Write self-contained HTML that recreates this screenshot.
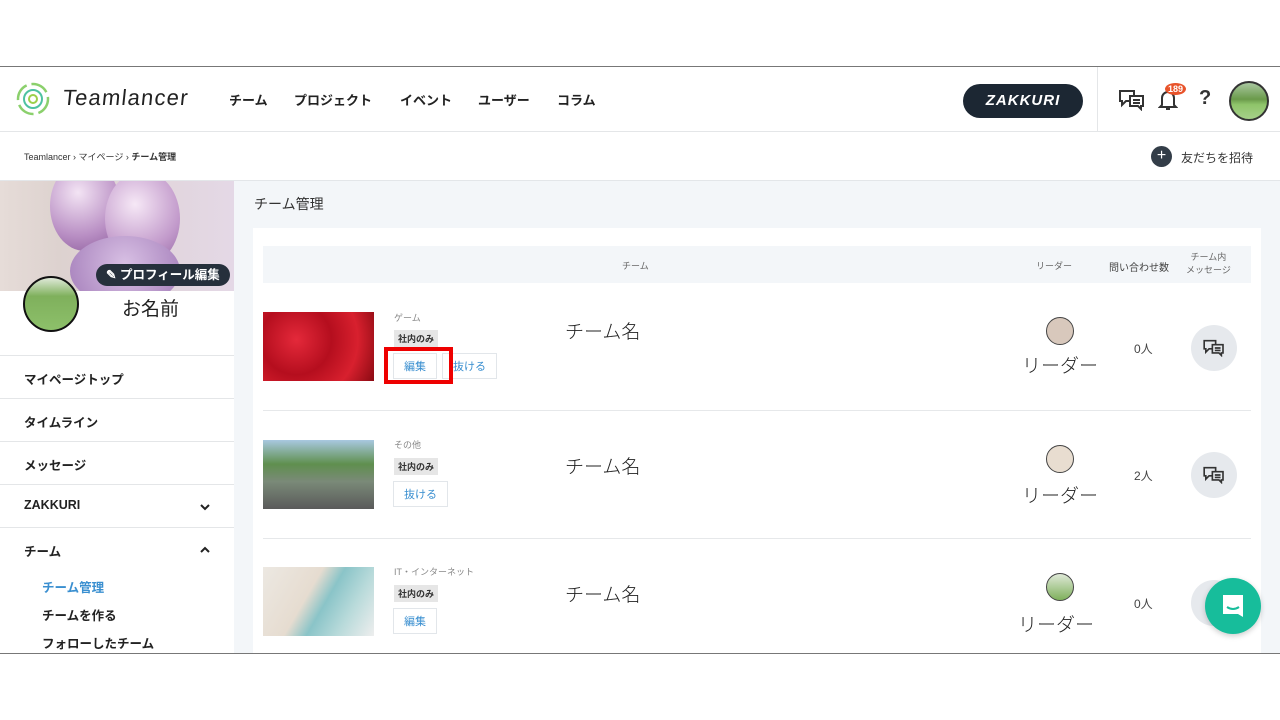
<!DOCTYPE html>
<html><head><meta charset="utf-8"><style>
*{margin:0;padding:0;box-sizing:border-box}
body{width:1280px;height:720px;background:#fff;font-family:"Liberation Sans","Noto Sans CJK JP",sans-serif;position:relative;overflow:hidden;color:#333}
.a{position:absolute}
.nav{font-size:13px;font-weight:bold;color:#222;top:90px}
.side{left:0;width:234px;border-top:1px solid #e4e6e8;height:43px;font-size:12.5px;font-weight:bold;color:#222;padding:13px 0 0 24px}
.tag{font-size:9px;font-weight:bold;background:#e6e6e6;color:#333;padding:2px 4px}
.btn{font-size:11px;color:#3a8fd0;border:1px solid #e2e6ea;background:#fff;padding:4px 10px}
.big{font-size:19px;color:#222;font-weight:300}
.circ{border-radius:50%}
.msg{width:46px;height:46px;border-radius:50%;background:#e6e9ed}
</style></head><body>
<div class="a" style="top:66px;left:0;width:1280px;height:1px;background:#777"></div>
<div class="a" style="top:653px;left:0;width:1280px;height:1px;background:#777"></div>
<svg class="a" style="left:16px;top:82px" width="34" height="34" viewBox="0 0 34 34"><circle cx="17" cy="17" r="15" fill="none" stroke="#8bd06c" stroke-width="2.5" stroke-dasharray="18 5"/><circle cx="17" cy="17" r="9" fill="none" stroke="#4ec2a0" stroke-width="2"/><circle cx="17" cy="17" r="4" fill="none" stroke="#9ccf4a" stroke-width="2"/></svg>
<div class="a" style="left:63px;top:85px;font-size:22px;letter-spacing:1.2px;color:#222;transform:skewX(-6deg)">Teamlancer</div>
<div class="a nav" style="left:229px">チーム</div>
<div class="a nav" style="left:294px">プロジェクト</div>
<div class="a nav" style="left:400px">イベント</div>
<div class="a nav" style="left:478px">ユーザー</div>
<div class="a nav" style="left:557px">コラム</div>
<div class="a" style="left:963px;top:84px;width:120px;height:34px;border-radius:17px;background:#1c2733;color:#fff;font-weight:bold;font-style:italic;font-size:15px;letter-spacing:1px;text-align:center;line-height:34px">ZAKKURI</div>
<div class="a" style="left:1097px;top:67px;width:1px;height:64px;background:#e4e6e8"></div>
<svg class="a" style="left:1118px;top:89px" width="28" height="22" viewBox="0 0 28 22" fill="none" stroke="#333" stroke-width="2"><path d="M2 2h14v10H8l-4 4v-4H2z"/><path d="M12 7h13v10h-2v3l-3-3h-8z" fill="#fff"/><path d="M15 11h7M15 14h7"/></svg>
<svg class="a" style="left:1158px;top:89px" width="20" height="22" viewBox="0 0 20 22" fill="none" stroke="#333" stroke-width="2"><path d="M4 16V9a6 6 0 0112 0v7l2 2H2z"/><path d="M8 20h4"/></svg>
<div class="a circ" style="left:1165px;top:83px;background:#e8532a;color:#fff;font-size:9px;font-weight:bold;padding:1px 3px">189</div>
<div class="a" style="left:1199px;top:87px;font-size:20px;font-weight:bold;color:#333">?</div>
<div class="a circ" style="left:1229px;top:81px;width:40px;height:40px;border:2px solid #333;background:linear-gradient(#a9c7a0 0%,#6a9a4a 45%,#8fc46a 60%,#a6d08a 100%)"></div>
<div class="a" style="left:0;top:131px;width:1280px;height:1px;background:#e4e6e8"></div>
<div class="a" style="left:24px;top:150px;font-size:9px;color:#333">Teamlancer › マイページ › <b>チーム管理</b></div>
<div class="a circ" style="left:1151px;top:146px;width:21px;height:21px;background:#333d48;color:#fff;text-align:center;line-height:20px;font-size:16px">+</div>
<div class="a" style="left:1181px;top:149px;font-size:12px;color:#333">友だちを招待</div>
<div class="a" style="left:0;top:180px;width:1280px;height:3px;background:linear-gradient(#e0e3e6,#f3f6f9)"></div>
<div class="a" style="left:234px;top:181px;width:1046px;height:472px;background:#f3f6f9"></div>
<div class="a" style="left:0;top:181px;width:234px;height:110px;background:linear-gradient(90deg,#e6dcd8 0%,#ddd2cf 25%,#e4d8e6 100%);overflow:hidden">
<div class="a circ" style="left:50px;top:-20px;width:70px;height:90px;background:radial-gradient(circle at 40% 35%,#f3e4f4,#b98fc4 60%,#8a5a9a)"></div>
<div class="a circ" style="left:105px;top:-10px;width:75px;height:95px;background:radial-gradient(circle at 40% 35%,#f6e8f6,#c29acb 60%,#9062a0)"></div>
<div class="a circ" style="left:70px;top:55px;width:110px;height:70px;background:radial-gradient(circle at 50% 40%,#d8c0e4,#a27bb8)"></div>
</div>
<div class="a" style="left:96px;top:264px;width:134px;height:22px;border-radius:11px;background:#26303c;color:#fff;font-size:12.5px;font-weight:bold;line-height:22px;padding-left:10px">✎ プロフィール編集</div>
<div class="a circ" style="left:23px;top:276px;width:56px;height:56px;border:2px solid #111;background:linear-gradient(#dfe9d8 0%,#7fb05c 35%,#8dc06a 100%)"></div>
<div class="a" style="left:122px;top:294px;font-size:19px;color:#222">お名前</div>
<div class="a side" style="top:355px">マイページトップ</div>
<div class="a side" style="top:398px">タイムライン</div>
<div class="a side" style="top:441px">メッセージ</div>
<div class="a side" style="top:484px">ZAKKURI<svg style="position:absolute;left:199px;top:18px" width="12" height="8" viewBox="0 0 12 8"><path d="M2 2l4 4 4-4" fill="none" stroke="#222" stroke-width="2"/></svg></div>
<div class="a side" style="top:527px;height:126px">チーム<svg style="position:absolute;left:199px;top:18px" width="12" height="8" viewBox="0 0 12 8"><path d="M2 6l4-4 4 4" fill="none" stroke="#222" stroke-width="2"/></svg></div>
<div class="a" style="left:42px;top:577px;font-size:12.5px;font-weight:bold;color:#3a8fd0">チーム管理</div>
<div class="a" style="left:42px;top:605px;font-size:12.5px;font-weight:bold;color:#222">チームを作る</div>
<div class="a" style="left:42px;top:633px;font-size:12.5px;font-weight:bold;color:#222">フォローしたチーム</div>
<div class="a" style="left:254px;top:194px;font-size:14px;color:#333">チーム管理</div>
<div class="a" style="left:253px;top:228px;width:1008px;height:425px;background:#fff"></div>
<div class="a" style="left:263px;top:246px;width:988px;height:37px;background:#f3f6f9"></div>
<div class="a" style="left:622px;top:259px;font-size:9px;color:#666">チーム</div>
<div class="a" style="left:1036px;top:259px;font-size:9px;color:#666">リーダー</div>
<div class="a" style="left:1109px;top:259px;font-size:10px;color:#444">問い合わせ数</div>
<div class="a" style="left:1186px;top:251px;font-size:9px;color:#666;text-align:center;line-height:13px">チーム内<br>メッセージ</div>
<div class="a" style="left:263px;top:410px;width:988px;height:1px;background:#e6e8ea"></div>
<div class="a" style="left:263px;top:538px;width:988px;height:1px;background:#e6e8ea"></div>
<div class="a" style="left:263px;top:312px;width:111px;height:69px;background:radial-gradient(circle at 30% 40%,#e4293a 0,#b50e1e 40%,#d8202e 70%,#8a0a12 100%)"></div>
<div class="a" style="left:394px;top:311px;font-size:9px;color:#888">ゲーム</div>
<div class="a tag" style="left:394px;top:330px">社内のみ</div>
<div class="a btn" style="left:393px;top:353px">編集</div>
<div class="a btn" style="left:442px;top:353px">抜ける</div>
<div class="a" style="left:384px;top:347px;width:69px;height:37px;border:4px solid #e00"></div>
<div class="a big" style="left:565px;top:317px">チーム名</div>
<div class="a circ" style="left:1046px;top:317px;width:28px;height:28px;border:1.5px solid #444;background:#d8c8bc"></div>
<div class="a big" style="left:1022px;top:351px">リーダー</div>
<div class="a" style="left:1134px;top:340px;font-size:12px;color:#444">0人</div>
<div class="a msg" style="left:1191px;top:325px"></div>
<div class="a" style="left:263px;top:440px;width:111px;height:69px;background:linear-gradient(#a8c8e0 0%,#5f8f4e 35%,#7a8a78 60%,#5a5a5a 100%)"></div>
<div class="a" style="left:394px;top:438px;font-size:9px;color:#888">その他</div>
<div class="a tag" style="left:394px;top:458px">社内のみ</div>
<div class="a btn" style="left:393px;top:481px">抜ける</div>
<div class="a big" style="left:565px;top:452px">チーム名</div>
<div class="a circ" style="left:1046px;top:445px;width:28px;height:28px;border:1.5px solid #444;background:#e8ddd0"></div>
<div class="a big" style="left:1022px;top:481px">リーダー</div>
<div class="a" style="left:1134px;top:467px;font-size:12px;color:#444">2人</div>
<div class="a msg" style="left:1191px;top:452px"></div>
<div class="a" style="left:263px;top:567px;width:111px;height:69px;background:linear-gradient(120deg,#ece8e2 0%,#e6dcd0 40%,#8ac4c8 55%,#b8dada 75%,#eee 100%)"></div>
<div class="a" style="left:394px;top:565px;font-size:9px;color:#888">IT・インターネット</div>
<div class="a tag" style="left:394px;top:585px">社内のみ</div>
<div class="a btn" style="left:393px;top:608px">編集</div>
<div class="a big" style="left:565px;top:580px">チーム名</div>
<div class="a circ" style="left:1046px;top:573px;width:28px;height:28px;border:1.5px solid #444;background:linear-gradient(#dfe9d8,#7fb05c)"></div>
<div class="a big" style="left:1018px;top:610px">リーダー</div>
<div class="a" style="left:1134px;top:595px;font-size:12px;color:#444">0人</div>
<div class="a msg" style="left:1191px;top:580px"></div>
<div class="a circ" style="left:1205px;top:578px;width:56px;height:56px;background:#17bd9b;box-shadow:0 2px 6px rgba(0,0,0,.2)"></div>
<svg class="a" style="left:1219px;top:592px" width="28" height="28" viewBox="0 0 28 28"><path d="M4 3h20v22l-5-3H4z" fill="#fff"/><path d="M8 15q6 4 12 0" fill="none" stroke="#17bd9b" stroke-width="2"/></svg>
<svg class="a" style="left:1202px;top:339px" width="24" height="18" viewBox="0 0 28 22" fill="none" stroke="#333" stroke-width="2"><path d="M2 2h14v10H8l-4 4v-4H2z"/><path d="M12 7h13v10h-2v3l-3-3h-8z" fill="#e6e9ed"/><path d="M15 11h7M15 14h7"/></svg>
<svg class="a" style="left:1202px;top:466px" width="24" height="18" viewBox="0 0 28 22" fill="none" stroke="#333" stroke-width="2"><path d="M2 2h14v10H8l-4 4v-4H2z"/><path d="M12 7h13v10h-2v3l-3-3h-8z" fill="#e6e9ed"/><path d="M15 11h7M15 14h7"/></svg>
</body></html>
